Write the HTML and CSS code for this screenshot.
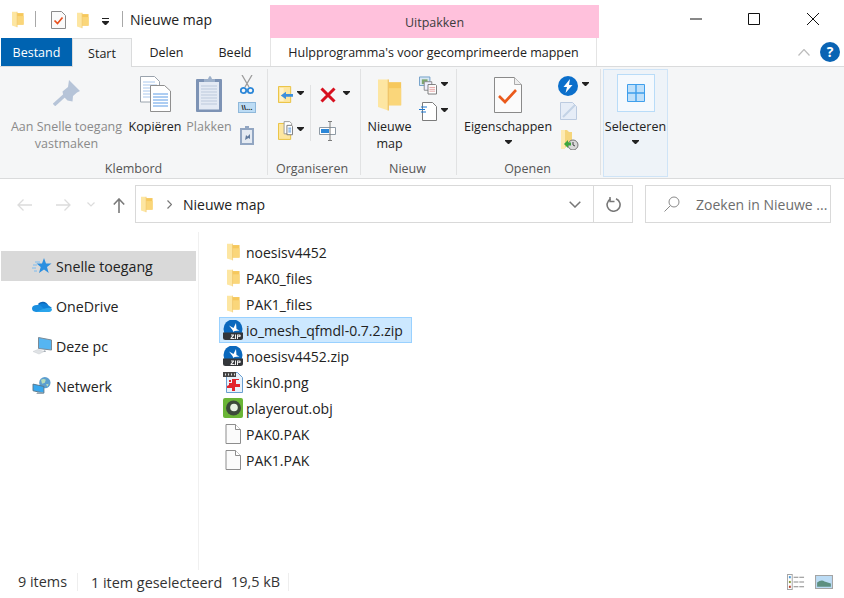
FILE: index.html
```html
<!DOCTYPE html>
<html lang="nl">
<head>
<meta charset="utf-8">
<title>Nieuwe map</title>
<link rel="stylesheet" href="styles.css">
</head>
<body>
<svg class="defs" width="0" height="0" aria-hidden="true">
  <symbol id="folder" viewBox="0 0 14 18">
    <path d="M4 1.500h9.500V15H4z" fill="#f6c85c"/>
    <path d="M5 5h8.500v10H5z" fill="#fad67a"/>
    <path d="M0 0h6v18L0 16z" fill="#fde6a2"/>
    <path d="M6 0v18" stroke="#eec266" stroke-width=".7"/>
  </symbol>
  <symbol id="blank" viewBox="0 0 16 20">
    <path d="M1 .5h9.500l5 5v14H1z" fill="#fbfbfb" stroke="#8d8d8d"/>
    <path d="M10.500.5v5h5" fill="#fff" stroke="#8d8d8d"/>
  </symbol>
  <symbol id="caret" viewBox="0 0 7 4"><path d="M0 0h7v1L4 4H3L0 1z" fill="#222"/></symbol>
  <symbol id="bolt" viewBox="0 0 20 20">
    <circle cx="10" cy="10" r="10" fill="#0b6fcb"/>
    <path d="M12 3 5.500 11H9l-1.500 6L14.500 9H11z" fill="#fff"/>
  </symbol>
</svg>

<div class="window">
  <header class="titlebar">
    <div class="qat">
      <svg class="qa-folder"><use href="#folder"/></svg>
      <span class="qa-sep"></span>
      <svg class="qa-check" viewBox="0 0 15 18"><path d="M.5.500h10l4 4v13H.5z" fill="#fafafa" stroke="#8b8b8b"/><path d="m3.500 9.500 3 3 5-6" fill="none" stroke="#e8501e" stroke-width="1.700"/></svg>
      <svg class="qa-folder2"><use href="#folder"/></svg>
      <svg class="qa-down" viewBox="0 0 7 7"><path d="M0 0h7v1H0zM0 3h7v1L4 7H3L0 4z" fill="#222"/></svg>
      <span class="qa-sep2"></span>
      <span class="wintitle">Nieuwe map</span>
    </div>
    <div class="context-head">Uitpakken</div>
    <div class="winctl">
      <svg class="ctl" viewBox="0 0 12 12"><path d="M0 6h12" stroke="#111"/></svg>
      <svg class="ctl" viewBox="0 0 12 12"><path d="M.5.500h11v11H.5z" fill="none" stroke="#111"/></svg>
      <svg class="ctl" viewBox="0 0 12 12"><path d="m0 0 12 12M12 0 0 12" stroke="#111"/></svg>
    </div>
  </header>

  <nav class="tabs">
    <span class="tab tab-file">Bestand</span>
    <span class="tab tab-active">Start</span>
    <span class="tab tab-share">Delen</span>
    <span class="tab tab-view">Beeld</span>
    <span class="tab tab-context">Hulpprogramma's voor gecomprimeerde mappen</span>
    <span class="tabs-right">
      <svg class="chev" viewBox="0 0 12 7"><path d="m.5 6.500 5.500-6 5.500 6" fill="none" stroke="#bcbcbc" stroke-width="1.200"/></svg>
      <span class="help">?</span>
    </span>
  </nav>

  <section class="ribbon">
    <div class="group g-clip">
      <div class="group-body">
        <div class="big big-pin disabled">
          <svg class="ic-pin" viewBox="0 0 28 26"><path d="M16 0 27 11l-3 1.500L20 16l-.5 5.500-5-1-4-4-1-5L15 7z" fill="#b6c4d8"/><path d="M12 15 1 25" stroke="#b6c4d8" stroke-width="3.500"/></svg>
          <span class="lbl">Aan Snelle toegang<br>vastmaken</span>
        </div>
        <div class="big big-copy">
          <svg class="ic-copy" viewBox="0 0 31 36">
            <path d="M.5.500h14l5 5V26H.5z" fill="#fff" stroke="#9aa3ad"/>
            <path d="M3 6h12M3 9h14M3 12h14M3 15h14M3 18h14M3 21h14" stroke="#a9c8ee"/>
            <path d="M10.500 9.500h14l6 5.500v20.500h-20z" fill="#fff" stroke="#8f8f8f"/>
            <path d="M13 18h15M13 21h15M13 24h15M13 27h15M13 30h15" stroke="#5c9ce6"/>
          </svg>
          <span class="lbl">Kopiëren</span>
        </div>
        <div class="big big-paste disabled">
          <svg class="ic-paste" viewBox="0 0 26 37">
            <path d="M1 3h24q1 0 1 1v31q0 1-1 1H1q-1 0-1-1V4q0-1 1-1z" fill="#7d93b5"/>
            <path d="M3 6h20v27.500H3z" fill="#e4eaf4"/>
            <path d="M5 10h16M5 13h16M5 16h16M5 19h16M5 22h16M5 25h16M5 28h16" stroke="#bcc9dc"/>
            <path d="M8 3h4q1-3 2-3t2 3h3v3H8z" fill="#9db0ca"/>
          </svg>
          <span class="lbl">Plakken</span>
        </div>
        <div class="smallcol">
          <svg class="ic-cut" viewBox="0 0 14 20"><path d="m2 0 7 12M12 0 5 12" stroke="#9c9c9c" stroke-width="1.300"/><circle cx="3.500" cy="15.500" r="2.700" fill="none" stroke="#2c87d8" stroke-width="1.800"/><circle cx="10.500" cy="15.500" r="2.700" fill="none" stroke="#2c87d8" stroke-width="1.800"/></svg>
          <span class="ic-path">\\...</span>
          <svg class="ic-short" viewBox="0 0 14 19"><path d="M0 2h14v17H0z" fill="#92a6c2"/><path d="M2 4h10v13H2z" fill="#e4eaf2"/><path d="M5 0h4v3H5z" fill="#92a6c2"/><path d="m5 14 1-5 1.500 1.500L10 8v5l-1.500-1z" fill="#627b9e"/></svg>
        </div>
      </div>
      <div class="group-label">Klembord</div>
    </div>

    <div class="group g-org">
      <div class="group-body org-grid">
        <div class="org-col">
          <div class="smallbtn">
            <svg class="ic-org" viewBox="0 0 16 18"><path d="M.5.500h13v17H.5z" fill="#fde6a0" stroke="#e9c03c"/><path d="M2 2h4v14H2z" fill="#fff2c9"/><path d="M3 10 8.500 6v2.500H16v3H8.500V14z" fill="#3c8fdc"/></svg>
            <svg class="car"><use href="#caret"/></svg>
          </div>
          <div class="smallbtn">
            <svg class="ic-org" viewBox="0 0 16 20"><path d="M.5 2.500h13v17H.5z" fill="#fde6a0" stroke="#e9c03c"/><path d="M6.500.5h6l2 2v11h-8z" fill="#fff" stroke="#999"/><path d="M9.500 4.500h5l1 1v9h-6z" fill="#fff" stroke="#777"/><path d="M11 7.500h3M11 9.500h3M11 11.500h3" stroke="#4a8fdc"/></svg>
            <svg class="car"><use href="#caret"/></svg>
          </div>
        </div>
        <span class="org-sep"></span>
        <div class="org-col">
          <div class="smallbtn">
            <svg class="ic-del" viewBox="0 0 16 16"><path d="m1.500 1.500 13 13M14.500 1.500l-13 13" stroke="#d7101f" stroke-width="3"/></svg>
            <svg class="car car-del"><use href="#caret"/></svg>
          </div>
          <div class="smallbtn">
            <svg class="ic-ren" viewBox="0 0 18 20"><path d="M.5 6.500h16v7H.5z" fill="#fff" stroke="#8e9aa5"/><path d="M2 8h8v4H2z" fill="#2c87d8"/><path d="M9 .5h4M11 .5v19M9 19.500h4" stroke="#7d7d7d" fill="none"/></svg>
          </div>
        </div>
      </div>
      <div class="group-label label-shift2">Organiseren</div>
    </div>

    <div class="group g-new">
      <div class="group-body">
        <div class="big big-newfolder">
          <svg class="ic-bigfolder"><use href="#folder"/></svg>
          <span class="lbl">Nieuwe<br>map</span>
        </div>
        <div class="new-col">
          <div class="smallbtn">
            <svg class="ic-new1" viewBox="0 0 19 19"><path d="M.5.500h11v9H.5z" fill="#d8e8f4" stroke="#6f9fc8"/><path d="M3 3h6v5H3z" fill="#7fa66d"/><path d="M5.500 5.500h8v9h-8z" fill="#eef" stroke="#888"/><path d="M9.500 8.500h8l1 1v9h-9z" fill="#fff" stroke="#777"/><path d="M11 11.500h6M11 13.500h6M11 15.500h6" stroke="#e4a0a0"/></svg>
            <svg class="car"><use href="#caret"/></svg>
          </div>
          <div class="smallbtn">
            <svg class="ic-new1" viewBox="0 0 18 19"><path d="M3.500.5h10l4 4v14h-14z" fill="#fff" stroke="#7b7b7b"/><path d="M2 5h6M0 7.500h6M2 10h5" stroke="#1f79d1"/></svg>
            <svg class="car"><use href="#caret"/></svg>
          </div>
        </div>
      </div>
      <div class="group-label label-shift1">Nieuw</div>
    </div>

    <div class="group g-open">
      <div class="group-body">
        <div class="big big-props">
          <svg class="ic-props" viewBox="0 0 28 36"><path d="M.5.500h20l7 7v28H.5z" fill="#fbfbfb" stroke="#8a8a8a"/><path d="M20.500.5v7h7" fill="#eee" stroke="#aaa"/><path d="m5 19 6 6 11-12" fill="none" stroke="#ea5a1c" stroke-width="2.600"/></svg>
          <span class="lbl">Eigenschappen</span>
          <svg class="car car-under"><use href="#caret"/></svg>
        </div>
        <div class="open-col">
          <div class="smallbtn">
            <svg class="ic-bolt"><use href="#bolt"/></svg>
            <svg class="car"><use href="#caret"/></svg>
          </div>
          <svg class="ic-edit" viewBox="0 0 17 18"><path d="M.5.500h12l4 4v13H.5z" fill="#e6edf7" stroke="#bccbe0"/><path d="m3 15 12-12" stroke="#c3d2e6" stroke-width="2"/></svg>
          <svg class="ic-hist" viewBox="0 0 18 20"><path d="M0 0h6l2 2h3v14H6l-3 3H0z" fill="#f5d57b"/><path d="M0 0h4v19H0z" fill="#fdeab1"/><circle cx="12" cy="15" r="5" fill="#d8d8d8" stroke="#777"/><path d="M12 12v3l2 1" stroke="#444" fill="none"/><path d="M3 14l4-4v2.500h3v3H7V18z" fill="#3da53d"/></svg>
        </div>
      </div>
      <div class="group-label label-shift1">Openen</div>
    </div>

    <div class="group g-sel">
      <div class="sel-box">
        <svg class="ic-sel" viewBox="0 0 18 18"><path d="M.5.500h17v17H.5z" fill="#bfe0fa" stroke="#3f9fec"/><path d="M9 0v18M0 9h18" stroke="#3f9fec" stroke-width="1.400"/></svg>
      </div>
      <span class="lbl">Selecteren</span>
      <svg class="car car-under"><use href="#caret"/></svg>
    </div>
  </section>

  <div class="navbar">
    <svg class="nav-ic nav-back" viewBox="0 0 16 12"><path d="M15 6H1M6.500.5 1 6l5.500 5.500" fill="none" stroke="#dcdcdc" stroke-width="1.300"/></svg>
    <svg class="nav-ic nav-fwd" viewBox="0 0 16 12"><path d="M1 6h14M9.500.5 15 6l-5.500 5.500" fill="none" stroke="#dcdcdc" stroke-width="1.300"/></svg>
    <svg class="nav-rec" viewBox="0 0 8 5"><path d="m.5.500 3.500 3.500 3.500-3.500" fill="none" stroke="#dcdcdc" stroke-width="1.200"/></svg>
    <svg class="nav-up" viewBox="0 0 12 15"><path d="M6 15V1M.8 6.500 6 1l5.200 5.500" fill="none" stroke="#7a7a7a" stroke-width="1.600"/></svg>
    <div class="address">
      <svg class="addr-folder"><use href="#folder"/></svg>
      <svg class="addr-chev" viewBox="0 0 5 9"><path d="m.5.500 4 4-4 4" fill="none" stroke="#777" stroke-width="1.200"/></svg>
      <span class="addr-text">Nieuwe map</span>
      <span class="addr-drop"><svg class="drop-ic" viewBox="0 0 12 7"><path d="m.7.700 5.300 5.300 5.300-5.300" fill="none" stroke="#777" stroke-width="1.500"/></svg></span>
      <span class="addr-refresh"><svg class="ref-ic" viewBox="0 0 15 15"><path d="M4.500 2A6.500 6.500 0 1 0 10 1.700" fill="none" stroke="#777" stroke-width="1.600"/><path d="M4 0v4.500h4.500" fill="none" stroke="#777" stroke-width="1.500"/></svg></span>
    </div>
    <div class="search">
      <svg class="search-ic" viewBox="0 0 16 16"><circle cx="10" cy="6" r="5" fill="none" stroke="#8a8a8a"/><path d="m6.500 9.500-6 6" stroke="#8a8a8a"/></svg>
      <span class="search-text">Zoeken in Nieuwe ...</span>
    </div>
  </div>

  <main class="main">
    <aside class="sidebar">
      <div class="side-row side-active">
        <svg class="side-ic" viewBox="0 0 20 18"><path d="m12 1 2 5.500h5.500L15 10l1.700 6L12 12.500 7 16l1.700-6L4.500 6.500H10z" fill="#2b8fe0"/><path d="M3 5h5M1 8h4M0 11h4M2 14h3" stroke="#7cbcf0"/></svg>
        <span>Snelle toegang</span>
      </div>
      <div class="side-row">
        <svg class="side-ic" viewBox="0 0 20 14"><path d="M6 5a6 6 0 0 1 10 1L10 10z" fill="#0a64b8"/><path d="M7 5q5-2 9 1l4 3-9 3z" fill="#0f80d8"/><path d="M4 13Q0 12.500 0 9.500 0 6 5 6q3-1 6 3l6 4z" fill="#1a8fe0"/><path d="M4 13h13q3-.5 3-3-2-2-5-1l-4 1z" fill="#2aa5ec"/></svg>
        <span>OneDrive</span>
      </div>
      <div class="side-row">
        <svg class="side-ic" viewBox="0 0 20 18"><path d="M6.500.5 19.500 3v10l-13-1.500z" fill="#55b5f2" stroke="#7a8a96"/><path d="m13 13 1 2h-4z" fill="#a8b0b8"/><path d="M1 14.500 6 12.500l6 2L7 17z" fill="#dfe2e5" stroke="#c8ccd0" stroke-width=".5"/></svg>
        <span>Deze pc</span>
      </div>
      <div class="side-row">
        <svg class="side-ic" viewBox="0 0 20 19"><circle cx="13" cy="6" r="6" fill="#5c9ecf"/><path d="M9 3q3-2 5 0l-1 3-3 1zM14 8l3-1-1 3z" fill="#b8dcb8"/><path d="M.5 7.500 12 10v7L.5 14.500z" fill="#39a8ee" stroke="#59768a"/><path d="M5 16h6l1 2H4z" fill="#9aa8b2"/></svg>
        <span>Netwerk</span>
      </div>
    </aside>
    <div class="files">
      <div class="file"><span class="file-ic"><svg class="ic-fold"><use href="#folder"/></svg></span>noesisv4452</div>
      <div class="file"><span class="file-ic"><svg class="ic-fold"><use href="#folder"/></svg></span>PAK0_files</div>
      <div class="file"><span class="file-ic"><svg class="ic-fold"><use href="#folder"/></svg></span>PAK1_files</div>
      <div class="file file-sel"><span class="file-ic"><svg class="ic-zip" viewBox="0 0 20 20"><circle cx="10" cy="9" r="9.500" fill="#0a68bd"/><path d="M6 5.500 10.500 8 13 3l.5 6 3 1.500-5 .5-1 1-1-2z" fill="#fff"/><path d="M0 12.500h20v5q0 2.500-2.500 2.500h-15Q0 20 0 17.500z" fill="#33363a"/><path d="M8 14.500h3v1l-2 2.500h2.500v1h-4v-1l2-2.500H8zM12 14.500h1v4.500h-1zM14 14.500h2.500q1.300 0 1.300 1.300t-1.300 1.300H15V19h-1zM15 15.500v.7h1.200v-.7z" fill="#eee"/></svg></span>io_mesh_qfmdl-0.7.2.zip</div>
      <div class="file"><span class="file-ic"><svg class="ic-zip" viewBox="0 0 20 20"><circle cx="10" cy="9" r="9.500" fill="#0a68bd"/><path d="M6 5.500 10.500 8 13 3l.5 6 3 1.500-5 .5-1 1-1-2z" fill="#fff"/><path d="M0 12.500h20v5q0 2.500-2.500 2.500h-15Q0 20 0 17.500z" fill="#33363a"/><path d="M8 14.500h3v1l-2 2.500h2.500v1h-4v-1l2-2.500H8zM12 14.500h1v4.500h-1zM14 14.500h2.500q1.300 0 1.300 1.300t-1.300 1.300H15V19h-1zM15 15.500v.7h1.200v-.7z" fill="#eee"/></svg></span>noesisv4452.zip</div>
      <div class="file"><span class="file-ic"><svg class="ic-png" viewBox="0 0 20 21"><path d="M3.500.5h11l5 5v15h-16z" fill="#e8f2fb" stroke="#6a9fd0"/><path d="M0 0h13v5H0z" fill="#444"/><path d="M2 1.500h1v2H2zM5 1.500h1v2H5zM8 1.500h1v2H8zM11 1.500h1v2h-1z" fill="#ddd"/><path d="M9 7v4H6v2l-2 1v2h5v3h3v-4h5v-3h-4V8h3V7zM6 8h2v2H6z" fill="#e2242c"/></svg></span>skin0.png</div>
      <div class="file"><span class="file-ic"><svg class="ic-obj" viewBox="0 0 20 20"><path d="M2 0h16q2 0 2 2v16q0 2-2 2H2q-2 0-2-2V2q0-2 2-2z" fill="#6ab536"/><circle cx="10.500" cy="10" r="7.500" fill="#3c4a3a"/><circle cx="11" cy="9.500" r="3.800" fill="#e8f2e4"/></svg></span>playerout.obj</div>
      <div class="file"><span class="file-ic"><svg class="ic-blank"><use href="#blank"/></svg></span>PAK0.PAK</div>
      <div class="file"><span class="file-ic"><svg class="ic-blank"><use href="#blank"/></svg></span>PAK1.PAK</div>
    </div>
  </main>

  <footer class="status">
    <span class="st-count">9 items</span>
    <span class="st-sel">1 item geselecteerd</span>
    <span class="st-size">19,5 kB</span>
    <span class="st-views">
      <svg class="st-details" viewBox="0 0 19 15" preserveAspectRatio="none"><path d="M.5.500h5v14h-5z" fill="#fff" stroke="#a4a4a4"/><path d="M2 2h2v2H2z" fill="#4a9ad8"/><path d="M2 6.500h2v2H2z" fill="#8a9a3a"/><path d="M2 11h2v2H2z" fill="#b8402a"/><path d="M7 3h5M13 3h5M7 7.500h5M13 7.500h5M7 12h5M13 12h5" stroke="#8a8a8a"/></svg>
      <svg class="st-thumb" viewBox="0 0 17 13" preserveAspectRatio="none"><path d="M.5.500h16v12H.5z" fill="#bcdcf5" stroke="#a4a4a4" stroke-width="1"/><path d="M2 7q4-3 7-1l6 2v3H2z" fill="#5d8f80"/></svg>
    </span>
  </footer>
</div>
</body>
</html>
```

FILE: styles.css
```css
* { box-sizing: border-box; }
html, body { margin: 0; padding: 0; height: 100%; background: #fff; overflow: hidden; }
body { font-family: "Open Sans", "Noto Sans", sans-serif; font-size: 12px; color: #222; }
svg { display: block; flex: none; }
.defs { position: absolute; }
.window { width: 844px; height: 598px; display: flex; flex-direction: column; }

/* title bar */
.titlebar { height: 38px; display: flex; flex: none; }
.qat { width: 270px; display: flex; align-items: center; }
.qa-folder { width: 12px; height: 17px; margin-left: 12px; margin-top: 1px; }
.qa-sep { width: 1px; height: 16px; background: #a8a8a8; margin-left: 11px; }
.qa-check { width: 15px; height: 18px; margin-left: 15px; margin-top: 2px; }
.qa-folder2 { width: 12px; height: 17px; margin-left: 11px; margin-top: 2px; }
.qa-down { width: 7px; height: 7px; margin-left: 13px; margin-top: 4px; }
.qa-sep2 { width: 1px; height: 16px; background: #a8a8a8; margin-left: 13px; }
.wintitle { margin-left: 7px; font-size: 14px; color: #222; }
.context-head { width: 329px; margin-top: 5px; height: 33px; background: #ffc1dc; text-align: center; line-height: 35px; font-size: 12.500px; color: #3c3c3c; }
.winctl { margin-left: 91px; display: flex; align-items: flex-start; }
.ctl { width: 12px; height: 12px; margin-top: 13px; margin-left: 46px; }
.ctl:first-child { margin-left: 0; }
.ctl:last-child { margin-left: 47px; }

/* tabs */
.tabs { height: 29px; flex: none; display: flex; border-bottom: 1px solid #dadbdc; position: relative; font-size: 12.500px; }
.tab { display: flex; align-items: center; justify-content: center; height: 28px; }
.tab-file { width: 71px; margin-left: 1px; background: #0063b1; color: #fff; }
.tab-active { width: 60px; height: 29px; background: #f5f6f7; border: 1px solid #dadbdc; border-bottom: 0; z-index: 1; }
.tab-share { width: 69px; }
.tab-view { width: 68px; }
.tab-context { width: 327px; margin-left: 1px; border-left: 1px solid #e4e4e4; border-right: 1px solid #e4e4e4; }
.tabs-right { margin-left: auto; display: flex; align-items: center; padding-right: 4px; }
.chev { width: 12px; height: 7px; margin-right: 10px; }
.help { width: 20px; height: 20px; border-radius: 50%; background: #0a64b4; color: #fff; font-weight: 700; font-size: 14px; line-height: 20px; text-align: center; }

/* ribbon */
.ribbon { height: 112px; flex: none; background: #f5f6f7; border-bottom: 1px solid #dadbdc; display: flex; font-size: 12.500px; }
.group { display: flex; flex-direction: column; }
.g-clip, .g-org, .g-new, .g-open { border-right: 1px solid #e1e2e3; margin: 2px 0 3px; }
.group-body { flex: 1; display: flex; min-height: 0; }
.group-label { height: 15px; line-height: 18px; text-align: center; color: #555; font-size: 12.500px; }
.label-shift1 { padding-right: 2px; }
.label-shift2 { padding-right: 4px; }
.lbl { line-height: 17px; text-align: center; white-space: nowrap; display: block; }
.big { display: flex; flex-direction: column; align-items: center; padding-top: 7px; }
.disabled .lbl { color: #8a8a8a; }
.g-clip { width: 268px; }
.big-pin { width: 113px; margin-left: 10px; }
.ic-pin { width: 28px; height: 26px; margin: 4px 0 12px; }
.big-copy { margin-left: 5px; width: 54px; }
.ic-copy { width: 31px; height: 36px; margin-bottom: 6px; }
.big-paste { margin-left: 4px; width: 46px; }
.ic-paste { width: 26px; height: 37px; margin-bottom: 5px; }
.smallcol { margin-left: 6px; width: 18px; display: flex; flex-direction: column; align-items: center; padding-top: 6px; }
.ic-cut { width: 14px; height: 20px; }
.ic-path { width: 18px; height: 11px; margin-top: 7px; background: #bcdcf5; border: 1px solid #8fb8da; font: 700 8px/9px "Liberation Sans", sans-serif; color: #222; text-align: center; overflow: hidden; }
.ic-short { width: 14px; height: 19px; margin-top: 13px; }

.g-org { width: 93px; }
.org-grid { padding: 16px 0 0 10px; }
.org-col { display: flex; flex-direction: column; gap: 17px; }
.org-sep { width: 1px; height: 56px; background: #e1e2e3; margin: 0 9px 0 6px; }
.smallbtn { display: flex; align-items: center; height: 19px; }
.ic-org { width: 15px; height: 19px; }
.car { width: 7px; height: 4px; margin-left: 4px; margin-top: -4px; }
.car-del { margin-left: 7px; }
.ic-del { width: 16px; height: 16px; }
.ic-ren { width: 18px; height: 20px; margin-left: -1px; }

.g-new { width: 96px; }
.big-newfolder { width: 57px; padding-top: 9px; }
.ic-bigfolder { width: 24px; height: 34px; margin-bottom: 6px; }
.new-col { display: flex; flex-direction: column; gap: 7px; margin-left: 1px; padding-top: 7px; }
.ic-new1 { width: 18px; height: 19px; }

.g-open { width: 144px; }
.big-props { width: 88px; margin-left: 7px; }
.ic-props { width: 28px; height: 36px; margin: 1px 0 5px; }
.car-under { margin: 5px 0 0; }
.open-col { margin-left: 6px; display: flex; flex-direction: column; padding-top: 7px; }
.ic-bolt { width: 20px; height: 20px; }
.ic-edit { width: 17px; height: 18px; margin: 7px 0 0 2px; }
.ic-hist { width: 18px; height: 20px; margin: 10px 0 0 3px; }

.g-sel { width: 65px; margin: 2px 0 1px 2px; background: #eef3f8; border: 1px solid #cfe4f7; display: flex; flex-direction: column; align-items: center; }
.sel-box { width: 38px; height: 38px; margin-top: 4px; background: #f5f9fd; border: 1px solid #b9dcf8; display: flex; align-items: center; justify-content: center; margin-bottom: 6px; }
.ic-sel { width: 18px; height: 18px; }

/* nav bar */
.navbar { height: 50px; flex: none; display: flex; align-items: flex-start; padding-top: 6px; font-size: 14px; }
.nav-ic { width: 16px; height: 12px; margin-top: 14px; }
.nav-back { margin-left: 17px; }
.nav-fwd { margin-left: 22px; }
.nav-rec { width: 8px; height: 5px; margin: 17px 0 0 16px; }
.nav-up { width: 12px; height: 15px; margin: 13px 0 0 18px; }
.address { margin-left: 10px; width: 498px; height: 38px; border: 1px solid #d9d9d9; display: flex; align-items: center; }
.addr-folder { width: 12px; height: 17px; margin-left: 5px; }
.addr-chev { width: 5px; height: 9px; margin-left: 14px; }
.addr-text { margin-left: 11px; flex: 1; font-size: 14px; }
.addr-drop { width: 40px; height: 100%; padding-left: 4px; display: flex; align-items: center; justify-content: center; }
.drop-ic { width: 12px; height: 7px; }
.addr-refresh { width: 39px; height: 100%; border-left: 1px solid #d9d9d9; display: flex; align-items: center; justify-content: center; }
.ref-ic { width: 15px; height: 15px; }
.search { margin-left: 12px; width: 186px; height: 38px; border: 1px solid #d9d9d9; display: flex; align-items: center; }
.search-ic { width: 16px; height: 16px; margin-left: 18px; }
.search-text { margin-left: 16px; color: #6d6d6d; white-space: nowrap; font-size: 14px; }

/* main */
.main { flex: 1; display: flex; min-height: 0; font-size: 14px; }
.sidebar { width: 199px; flex: none; border-right: 1px solid #f0f0f0; padding-top: 19px; margin-top: 3px; display: flex; flex-direction: column; gap: 10px; font-size: 14.200px; }
.side-row { height: 30px; display: flex; align-items: center; padding-left: 31px; margin: 0 2px 0 1px; }
.side-row span { margin-left: 4px; }
.side-active { background: #d9d9d9; }
.side-ic { width: 20px; height: 18px; }
.files { flex: 1; padding: 10px 0 0 20px; display: flex; flex-direction: column; }
.file { height: 26px; width: 193px; display: flex; align-items: center; border: 1px solid transparent; padding-left: 2px; white-space: nowrap; }
.file-sel { background: #cce8ff; border-color: #99d1ff; }
.file-ic { width: 24px; height: 22px; display: flex; align-items: center; justify-content: center; padding-right: 2px; }
.ic-fold { width: 13px; height: 18px; }
.ic-blank { width: 16px; height: 20px; }
.ic-zip { width: 20px; height: 20px; }
.ic-png { width: 20px; height: 21px; }
.ic-obj { width: 20px; height: 20px; }

/* status */
.status { height: 28px; flex: none; display: flex; align-items: center; font-size: 14.400px; color: #333; padding-bottom: 4px; }
.st-count { margin-left: 18px; width: 60px; border-right: 1px solid #eee; line-height: 18px; }
.st-sel { margin-left: 13px; width: 140px; white-space: nowrap; }
.st-size { width: 58px; white-space: nowrap; border-right: 1px solid #eee; line-height: 18px; }
.st-views { margin-left: auto; display: flex; align-items: center; padding-right: 11px; gap: 10px; }
.st-details { width: 18px; height: 16px; }
.st-thumb { width: 18px; height: 14px; }
```
